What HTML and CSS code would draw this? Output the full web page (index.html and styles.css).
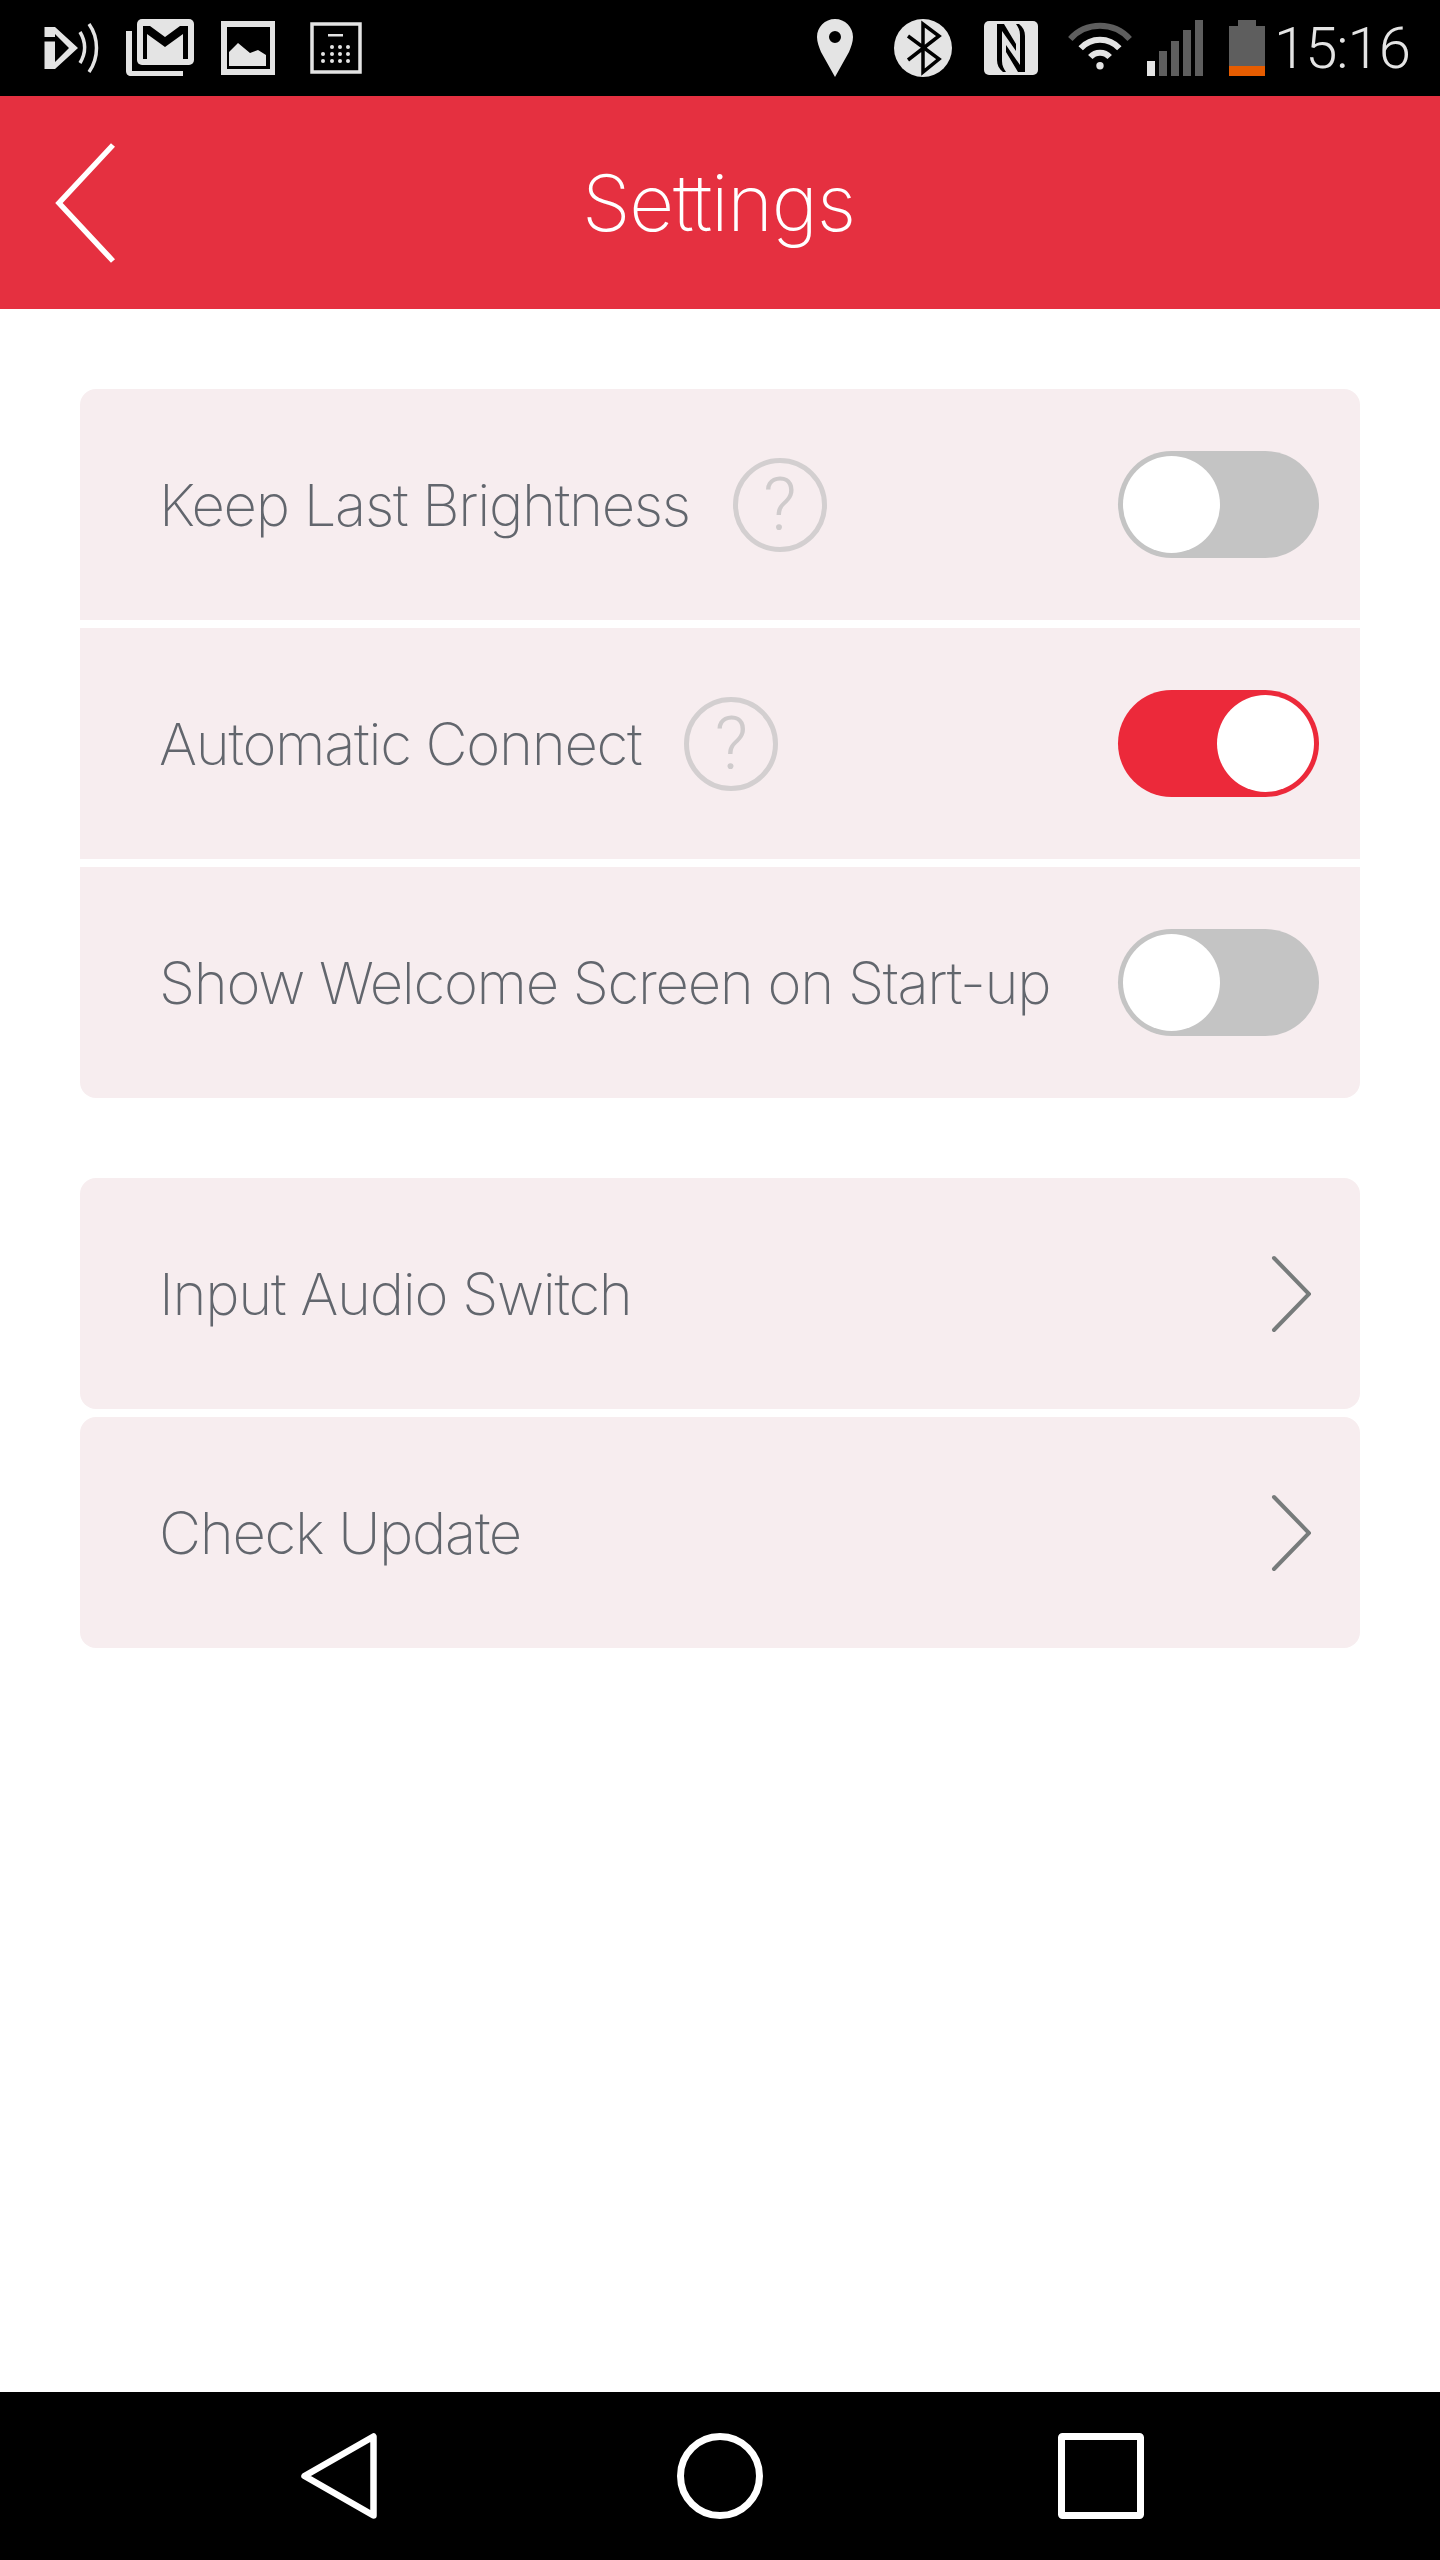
FILE: index.html
```html
<!DOCTYPE html>
<html>
    <head>
        <title>Settings</title>
        <meta charset="utf-8">
        <link rel="stylesheet" href="styles.css">
    </head>
    <body>
        <div class="status_bar">
            <svg class="icon_cast" width="56" height="96" viewBox="44 0 56 96">
                <path fill="#e4e4e4" fill-rule="evenodd" d="M44.5 27H55L78 48 55 69H44.5V41.5H55V62L69 48 55 34V37H44.5z"/>
                <path fill="none" stroke="#e4e4e4" stroke-width="3.500" d="M80 32C86 42 86 53 80 63M89 24C99 38 99 58 89 72"/>
            </svg>
            <svg class="icon_gmail" width="68" height="96" viewBox="126 0 68 96">
                <path fill="#e4e4e4" d="M126 31h6v40h51v5h-52c-3 0-5-2-5-5z"/>
                <rect fill="#e4e4e4" x="137" y="19" width="57" height="46" rx="5"/>
                <path fill="#000" d="M143 26h7l15 11 15-11h8v33h-5V34l-18 13-18-13v25h-4z"/>
            </svg>
            <svg class="icon_image" width="54" height="96" viewBox="221 0 54 96">
                <rect fill="#e4e4e4" x="221" y="21" width="54" height="54"/>
                <rect fill="#000" x="227" y="27" width="43" height="42"/>
                <path fill="#e4e4e4" d="M229 52l9-9 12 10 8-3 8 5v11h-37z"/>
            </svg>
            <svg class="icon_calc" width="52" height="96" viewBox="310 0 52 96">
                <rect fill="none" stroke="#e4e4e4" stroke-width="3.5" x="312" y="24" width="48" height="48"/>
                <rect fill="#e4e4e4" x="328" y="34" width="15" height="2.5"/>
                <g fill="#e4e4e4">
                    <circle cx="332" cy="47" r="2"/><circle cx="340" cy="47" r="2"/><circle cx="348" cy="47" r="2"/>
                    <circle cx="323" cy="54" r="2"/><circle cx="332" cy="54" r="2"/><circle cx="340" cy="54" r="2"/><circle cx="348" cy="54" r="2"/>
                    <circle cx="323" cy="61" r="2"/><circle cx="332" cy="61" r="2"/><circle cx="340" cy="61" r="2"/><circle cx="348" cy="61" r="2"/>
                </g>
            </svg>

            <svg class="icon_pin" width="36" height="96" viewBox="817 0 36 96">
                <path fill="#e4e4e4" fill-rule="evenodd" d="M835 19c10 0 18 8 18 18 0 5-2 10-4 15l-14 25-14-25c-2-5-4-10-4-15 0-10 8-18 18-18zm0 12a6 6 0 1 0 0 12 6 6 0 0 0 0-12z"/>
            </svg>
            <svg class="icon_bt" width="58" height="96" viewBox="894 0 58 96">
                <circle fill="#e4e4e4" cx="923" cy="48" r="29"/>
                <path fill="none" stroke="#000" stroke-width="3.5" d="M908 36l31 23-16 13V24l16 12-31 24"/>
            </svg>
            <svg class="icon_nfc" width="54" height="96" viewBox="0 -21 54 96">
                <rect fill="#e4e4e4" width="54" height="54" rx="5"/>
                <path fill="#000" d="M13 3h7l12 20v7L18 10v30c0 5 2 8 4 11h-3c-4-3-6-7-6-12zM41 51h-7L22 31v-7l14 20V14c0-5-2-8-4-11h3c4 3 6 7 6 12z"/>
            </svg>
            <svg class="icon_wifi" width="68" height="96" viewBox="0 -22 68 96">
                <g fill="none" stroke-width="6">
                    <path stroke="#5e5e5e" d="M4.300 16.900A40 40 0 0 1 63.700 16.900"/>
                    <path stroke="#e4e4e4" d="M14.700 26.300A26 26 0 0 1 53.300 26.300"/>
                    <path stroke="#e4e4e4" d="M24.300 35A13 13 0 0 1 43.700 35"/>
                </g>
                <circle fill="#e4e4e4" cx="34" cy="43.700" r="3.700"/>
            </svg>
            <svg class="icon_signal" width="56" height="96" viewBox="1147 0 56 96">
                <rect fill="#e4e4e4" x="1147" y="61" width="8" height="15"/>
                <g fill="#5e5e5e">
                    <rect x="1159" y="51" width="8" height="25"/>
                    <rect x="1171" y="41" width="8" height="35"/>
                    <rect x="1183" y="30" width="8" height="46"/>
                    <rect x="1195" y="20" width="8" height="56"/>
                </g>
            </svg>
            <svg class="icon_battery" width="36" height="96" viewBox="1229 0 36 96">
                <path fill="#5e5e5e" d="M1238 20h18v6h9v40h-36V26h9z"/>
                <rect fill="#e65c00" x="1229" y="66" width="36" height="10"/>
            </svg>
            <span class="clock">15:16</span>
        </div>

        <div class="header">
            <svg class="back" width="62" height="122" viewBox="0 0 62 122">
                <path fill="none" stroke="#fff" stroke-width="5.500" d="M58 3L4 61l54 58"/>
            </svg>
            <div class="title">Settings</div>
        </div>

        <div class="content">
            <div class="group">
                <div class="row">
                    <span class="label">Keep Last Brightness</span>
                    <span class="help">?</span>
                    <div class="toggle"><div class="knob"></div></div>
                </div>
                <div class="row">
                    <span class="label">Automatic Connect</span>
                    <span class="help">?</span>
                    <div class="toggle on"><div class="knob"></div></div>
                </div>
                <div class="row">
                    <span class="label">Show Welcome Screen on Start-up</span>
                    <div class="toggle"><div class="knob"></div></div>
                </div>
            </div>

            <div class="group">
                <div class="row">
                    <span class="label">Input Audio Switch</span>
                    <svg class="arrow" width="40" height="78" viewBox="0 0 40 78">
                        <path fill="none" stroke="#777b7b" stroke-width="4" stroke-linecap="round" d="M3 3l35 36L3 75"/>
                    </svg>
                </div>
                <div class="row">
                    <span class="label">Check Update</span>
                    <svg class="arrow" width="40" height="78" viewBox="0 0 40 78">
                        <path fill="none" stroke="#777b7b" stroke-width="4" stroke-linecap="round" d="M3 3l35 36L3 75"/>
                    </svg>
                </div>
            </div>
        </div>

        <div class="nav_bar">
            <svg width="76" height="86" viewBox="0 0 76 86">
                <path fill="none" stroke="#fff" stroke-width="6.500" stroke-linejoin="round" d="M72.500 3.500V82.500L3.500 43z"/>
            </svg>
            <svg class="nav_home" width="86" height="86" viewBox="0 0 86 86">
                <circle fill="none" stroke="#fff" stroke-width="7" cx="43" cy="43" r="39.500"/>
            </svg>
            <svg width="86" height="86" viewBox="0 0 86 86">
                <rect fill="none" stroke="#fff" stroke-width="7" x="3.500" y="3.500" width="79" height="79" rx="1"/>
            </svg>
        </div>
    </body>
</html>
```

FILE: styles.css
```css
* {
    box-sizing: border-box;
}

body {
    margin: 0;
    height: 2560px;
    display: flex;
    flex-direction: column;
    background: #fff;
    font-family: Inter, "Liberation Sans", sans-serif;
}

.status_bar {
    height: 96px;
    flex: none;
    display: flex;
    align-items: center;
    padding-left: 44px;
    background: #000;
}

.icon_gmail { margin-left: 26px; }
.icon_image { margin-left: 27px; }
.icon_calc { margin-left: 35px; }
.icon_pin { margin-left: 455px; }
.icon_bt { margin-left: 41px; }
.icon_nfc { margin-left: 32px; }
.icon_wifi { margin-left: 28px; }
.icon_signal { margin-left: 13px; }
.icon_battery { margin-left: 26px; }

.clock {
    margin-left: 9px;
    color: #e4e4e4;
    font-family: Roboto, sans-serif;
    font-size: 58px;
    font-weight: 300;
    letter-spacing: -1px;
}

.header {
    height: 213px;
    flex: none;
    display: grid;
    grid-template-columns: 1fr auto 1fr;
    align-items: center;
    padding-left: 55px;
    padding-right: 58px;
    background: #e53040;
}

.title {
    color: #fff;
    font-size: 78px;
    font-weight: 200;
    letter-spacing: -1.200px;
}

.content {
    flex: 1;
    padding: 80px 80px 0;
}

.group {
    display: flex;
    flex-direction: column;
    gap: 8px;
    margin-bottom: 80px;
}

.row {
    height: 231px;
    display: flex;
    align-items: center;
    padding: 0 41px 0 79px;
    background: #f7edef;
}

.row:first-child {
    border-radius: 16px 16px 0 0;
}

.row:last-child {
    border-radius: 0 0 16px 16px;
}

.group:last-child .row {
    border-radius: 16px;
}

.label {
    color: #62666d;
    font-size: 58px;
    font-weight: 200;
    letter-spacing: -1.300px;
}

.help {
    width: 94px;
    height: 94px;
    margin-left: 43px;
    display: flex;
    align-items: center;
    justify-content: center;
    border: 5px solid #d3cfd0;
    border-radius: 50%;
    color: #cfcbcc;
    font-family: Roboto, sans-serif;
    font-size: 74px;
    font-weight: 300;
}

.toggle {
    width: 201px;
    height: 107px;
    margin-left: auto;
    display: flex;
    align-items: center;
    padding: 5px;
    border-radius: 54px;
    background: #c4c4c4;
}

.toggle.on {
    justify-content: flex-end;
    background: #ec293a;
}

.knob {
    width: 97px;
    height: 97px;
    border-radius: 50%;
    background: #fff;
}

.arrow {
    margin-left: auto;
    margin-right: 8px;
}

.nav_bar {
    height: 168px;
    flex: none;
    display: flex;
    align-items: center;
    justify-content: space-between;
    padding: 0 296px 0 301px;
    background: #000;
}

.nav_home {
    margin-left: 5px;
}
```
